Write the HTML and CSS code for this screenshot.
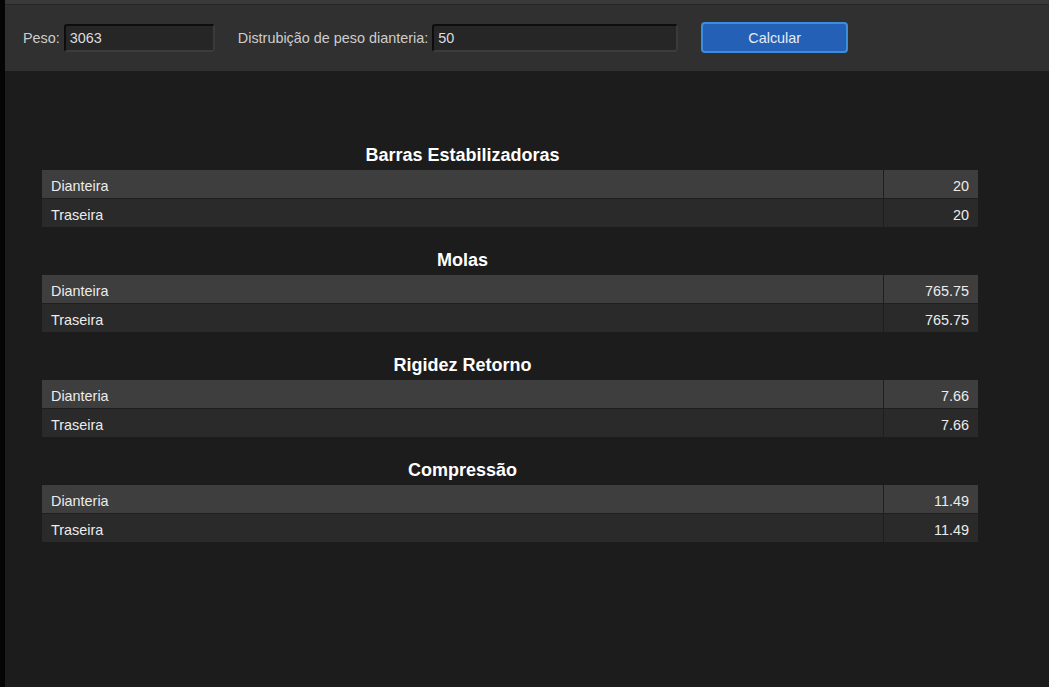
FILE: index.html
```html
<!DOCTYPE html>
<html lang="pt">
<head>
<meta charset="utf-8">
<title>Calculadora</title>
<link rel="stylesheet" href="styles.css">
</head>
<body>
<div class="frame">
  <div class="edge"></div>
  <div class="main">
    <div class="topline"></div>
    <div class="toolbar">
      <label class="lbl">Peso:</label>
      <input class="inp inp-peso" type="text" value="3063">
      <label class="lbl lbl-dist">Distrubição de peso dianteria:</label>
      <input class="inp inp-dist" type="text" value="50">
      <button class="btn">Calcular</button>
    </div>
    <div class="content">
      <table class="tbl">
        <thead><tr><th class="title">Barras Estabilizadoras</th><th class="blank"></th></tr></thead>
        <tbody>
          <tr class="odd"><td class="name">Dianteira</td><td class="val">20</td></tr>
          <tr class="even"><td class="name">Traseira</td><td class="val">20</td></tr>
        </tbody>
      </table>
      <table class="tbl">
        <thead><tr><th class="title">Molas</th><th class="blank"></th></tr></thead>
        <tbody>
          <tr class="odd"><td class="name">Dianteira</td><td class="val">765.75</td></tr>
          <tr class="even"><td class="name">Traseira</td><td class="val">765.75</td></tr>
        </tbody>
      </table>
      <table class="tbl">
        <thead><tr><th class="title">Rigidez Retorno</th><th class="blank"></th></tr></thead>
        <tbody>
          <tr class="odd"><td class="name">Dianteria</td><td class="val">7.66</td></tr>
          <tr class="even"><td class="name">Traseira</td><td class="val">7.66</td></tr>
        </tbody>
      </table>
      <table class="tbl">
        <thead><tr><th class="title">Compressão</th><th class="blank"></th></tr></thead>
        <tbody>
          <tr class="odd"><td class="name">Dianteria</td><td class="val">11.49</td></tr>
          <tr class="even"><td class="name">Traseira</td><td class="val">11.49</td></tr>
        </tbody>
      </table>
    </div>
  </div>
</div>
</body>
</html>
```
FILE: styles.css
```css
html, body {
  margin: 0;
  padding: 0;
  height: 100%;
  background: #1c1c1c;
  font-family: "Liberation Sans", Arial, sans-serif;
  font-size: 14px;
}
.frame {
  display: flex;
  min-height: 100%;
}
.edge {
  width: 5px;
  flex: none;
  background: #050505;
}
.main {
  flex: 1;
  display: flex;
  flex-direction: column;
  background: #1c1c1c;
}
.topline {
  height: 4px;
  background: #393939;
  border-bottom: 1px solid #262626;
}
.toolbar {
  height: 66px;
  box-sizing: border-box;
  background: #303030;
  display: flex;
  align-items: center;
  padding: 0 0 1px 18px;
}
.lbl {
  color: #cdcdcd;
  font-size: 14.4px;
  margin-right: 4px;
}
.lbl-dist {
  margin-left: 23px;
}
.inp {
  box-sizing: border-box;
  height: 28px;
  background: #262626;
  color: #dcdcdc;
  font-family: "Liberation Sans", Arial, sans-serif;
  font-size: 14.4px;
  padding: 0 4px;
  border-style: solid;
  border-width: 2px;
  border-color: #0d0d0d #3a3a3a #3c3c3c #0d0d0d;
  border-radius: 3px;
  outline: none;
}
.inp-peso { width: 151px; }
.inp-dist { width: 246px; }
.btn {
  margin-left: 23px;
  box-sizing: border-box;
  width: 147px;
  height: 31px;
  background: #2460b6;
  border: 2px solid #3b8ddf;
  border-radius: 4px;
  color: #e6ecf6;
  font-family: "Liberation Sans", Arial, sans-serif;
  font-size: 14.4px;
  cursor: pointer;
}
.content {
  padding: 70px 0 40px 37px;
  display: flex;
  flex-direction: column;
  gap: 19px;
}
.tbl {
  width: 936px;
  border-collapse: collapse;
  table-layout: fixed;
}
.title {
  height: 29px;
  padding: 0;
  color: #ffffff;
  font-size: 18px;
  font-weight: bold;
  text-align: center;
  vertical-align: middle;
}
.blank {
  width: 95px;
  padding: 0;
}
.tbl td {
  height: 25px;
  padding: 3px 9px 0;
  color: #ececec;
  font-size: 14.4px;
  vertical-align: middle;
}
.odd { background: #3e3e3e; border-bottom: 1px solid #1f1f1f; }
.even { background: #2a2a2a; }
.val {
  text-align: right;
  border-left: 1px solid #1e1e1e;
}
```
